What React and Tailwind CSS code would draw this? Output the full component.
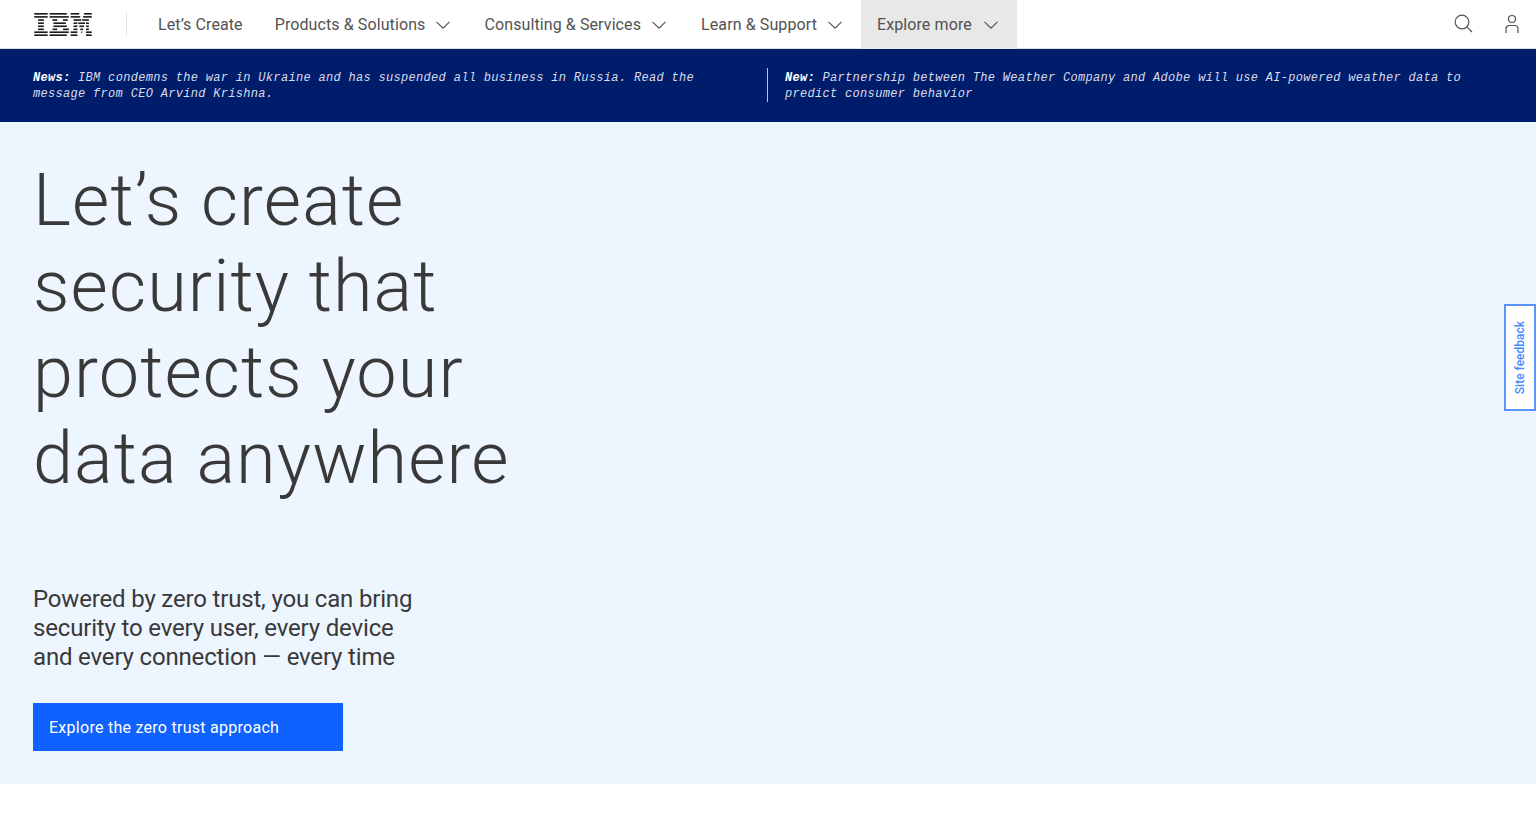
import React from 'react';

const navItems = [
  { label: 'Products & Solutions', pad: 'pr-[17px]' },
  { label: 'Consulting & Services', pad: 'pr-[18px]' },
  { label: 'Learn & Support', pad: 'pr-[17px]' },
];

const Chevron = ({ className }) => (
  <svg width="14" height="8" viewBox="0 0 14 8" fill="none" stroke="currentColor" strokeWidth="1.1" className={className}>
    <path d="M0.5 0.8L7 7.2L13.5 0.8" />
  </svg>
);

const IbmLogo = () => (
  <svg width="60" height="23" viewBox="0 0 60 24" className="shrink-0" fill="#1c1c1c">
    {/* I */}
    <rect x="0" y="0" width="14" height="1.7" />
    <rect x="0" y="3.2" width="14" height="1.7" />
    <rect x="4" y="6.5" width="6" height="1.7" />
    <rect x="4" y="9.8" width="6" height="1.7" />
    <rect x="4" y="13" width="6" height="1.7" />
    <rect x="4" y="16.2" width="6" height="1.7" />
    <rect x="0" y="19.2" width="14" height="1.7" />
    <rect x="0" y="22.3" width="14" height="1.7" />
    {/* B */}
    <rect x="16" y="0" width="18" height="1.7" />
    <rect x="16" y="3.2" width="20" height="1.7" />
    <rect x="19" y="6.5" width="5" height="1.7" /><rect x="30" y="6.5" width="5" height="1.7" />
    <rect x="20" y="9.8" width="13" height="1.7" />
    <rect x="20" y="13" width="14" height="1.7" />
    <rect x="19" y="16.2" width="5" height="1.7" /><rect x="30" y="16.2" width="6" height="1.7" />
    <rect x="16" y="19.2" width="20" height="1.7" />
    <rect x="16" y="22.3" width="18" height="1.7" />
    {/* M */}
    <rect x="38" y="0" width="9" height="1.7" /><rect x="52" y="0" width="8" height="1.7" />
    <rect x="38" y="3.2" width="10" height="1.7" /><rect x="51" y="3.2" width="9" height="1.7" />
    <rect x="41" y="6.5" width="8" height="1.7" /><rect x="50" y="6.5" width="7" height="1.7" />
    <rect x="41" y="9.8" width="4" height="1.7" /><rect x="46" y="9.8" width="7" height="1.7" /><rect x="54" y="9.8" width="3" height="1.7" />
    <rect x="41" y="13" width="4" height="1.7" /><rect x="47" y="13" width="5" height="1.7" /><rect x="54" y="13" width="3" height="1.7" />
    <rect x="41" y="16.2" width="4" height="1.7" /><rect x="48" y="16.2" width="3" height="1.7" /><rect x="54" y="16.2" width="3" height="1.7" />
    <rect x="38" y="19.2" width="7" height="1.7" /><rect x="49" y="19.2" width="1" height="1.7" /><rect x="54" y="19.2" width="6" height="1.7" />
    <rect x="38" y="22.3" width="7" height="1.7" /><rect x="54" y="22.3" width="6" height="1.7" />
  </svg>
);

const NewsItem = ({ tag, children }) => (
  <p className="font-['Liberation_Mono',monospace] text-[12px] leading-[16px] tracking-[0.31px] italic text-[#d8dcea]">
    <b className="text-white">{tag}:</b> {children}
  </p>
);

export default function App() {
  return (
    <div className="min-h-[824px] bg-white font-['Roboto',sans-serif]">
      {/* Masthead */}
      <header className="flex h-[49px] items-center border-b border-[#e0e0e0] bg-white">
        <div className="ml-[33px] flex h-full items-center">
          <IbmLogo />
          <div className="ml-[33px] h-6 w-px bg-[#e0e0e0]" />
        </div>
        <nav className="ml-[15px] flex h-full items-center pt-px text-[16px] tracking-[0.1px] text-[#525252]">
          <a className="px-4">Let’s Create</a>
          {navItems.map((item) => (
            <a key={item.label} className={`flex items-center pl-4 ${item.pad}`}>
              <span>{item.label}</span>
              <Chevron className="ml-[11px] mr-[1px] mt-px" />
            </a>
          ))}
          <a className="-mt-px ml-px flex h-[49px] items-center bg-[#e8e8e8] pl-4 pr-[19px] pt-px">
            <span>Explore more</span>
            <Chevron className="ml-[12px] mt-px" />
          </a>
        </nav>
        <div className="ml-auto mr-[17px] flex items-center gap-[31px] text-[#525252]">
          <svg width="20" height="20" viewBox="0 0 20 20" fill="none" stroke="currentColor" strokeWidth="1.2">
            <circle cx="8" cy="8" r="6.8" />
            <path d="M12.8 12.8L18 18" />
          </svg>
          <svg width="14" height="20" viewBox="0 0 14 20" fill="none" stroke="currentColor" strokeWidth="1.2">
            <circle cx="7" cy="5" r="3.5" />
            <path d="M1 19v-4a3.5 3.5 0 0 1 3.5-3.5h5A3.5 3.5 0 0 1 13 15v4" />
          </svg>
        </div>
      </header>

      {/* News bar */}
      <section className="flex h-[73px] items-center bg-[#001d6c] pl-[33px]">
        <div className="w-[734px] pr-[60px]">
          <NewsItem tag="News">IBM condemns the war in Ukraine and has suspended all business in Russia. Read the message from CEO Arvind Krishna.</NewsItem>
        </div>
        <div className="-mt-[1px] h-[34px] w-px bg-[#a6c8ff]" />
        <div className="w-[700px] pl-[17px]">
          <NewsItem tag="New">Partnership between The Weather Company and Adobe will use AI-powered weather data to predict consumer behavior</NewsItem>
        </div>
      </section>

      {/* Hero */}
      <main className="relative h-[662px] bg-[#edf5ff] pl-[33px] pt-[36px]">
        <h1 className="w-[520px] text-[72px] leading-[86px] font-light tracking-[1.1px] text-[#393939]">
          Let’s create security that protects your data anywhere
        </h1>
        <p className="mt-[83px] w-[400px] text-[24px] leading-[29px] tracking-[-0.17px] text-[#393939]">
          Powered by zero trust, you can bring security to every user, every device and every connection — every time
        </p>
        <a className="mt-[31px] flex h-12 w-[310px] items-center bg-[#0f62fe] pl-4 pt-px text-[16px] tracking-[0.27px] text-white">
          Explore the zero trust approach
        </a>
        <div className="absolute right-0 top-[182px] flex h-[107px] w-8 items-center justify-center border-2 border-[#5c93fb] bg-white">
          <span className="rotate-180 text-[12px] font-medium text-[#4589ff] [writing-mode:vertical-rl]">Site feedback</span>
        </div>
      </main>
    </div>
  );
}
